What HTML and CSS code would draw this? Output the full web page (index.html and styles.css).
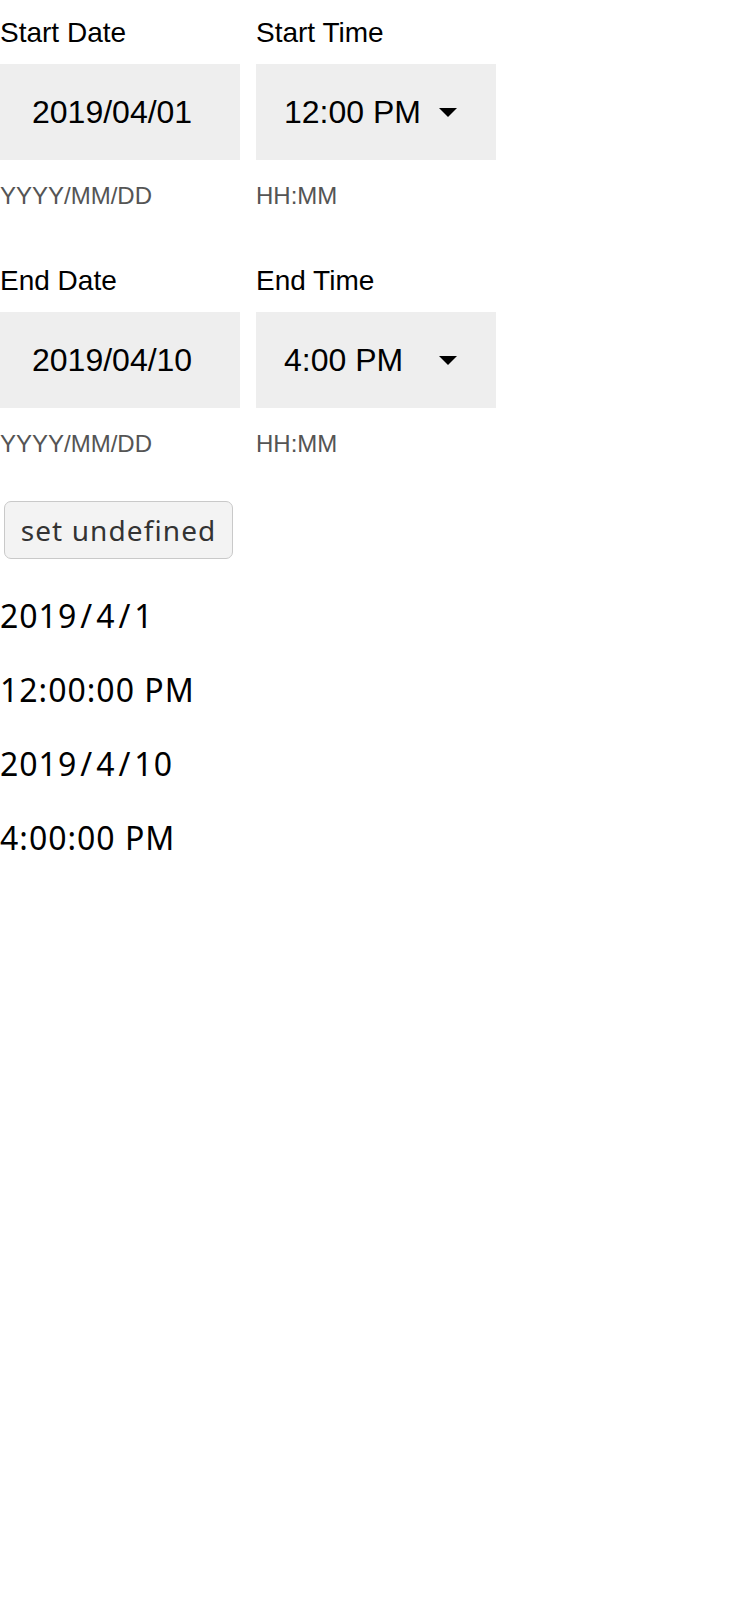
FILE: index.html
```html
<!DOCTYPE html>
<html lang="en">
<head>
<meta charset="utf-8">
<title>Date Time Pickers</title>
<link rel="stylesheet" href="styles.css">
</head>
<body>
<div class="page">
  <div class="row">
    <div class="field">
      <label class="label">Start Date</label>
      <div class="box">2019/04/01</div>
      <div class="helper">YYYY/MM/DD</div>
    </div>
    <div class="field">
      <label class="label">Start Time</label>
      <div class="box select"><span class="value">12:00 PM</span><svg class="arrow" width="18" height="9" viewBox="0 0 18 9"><path d="M0 0L9 9L18 0Z" fill="#000"/></svg></div>
      <div class="helper">HH:MM</div>
    </div>
  </div>
  <div class="row second">
    <div class="field">
      <label class="label">End Date</label>
      <div class="box">2019/04/10</div>
      <div class="helper">YYYY/MM/DD</div>
    </div>
    <div class="field">
      <label class="label">End Time</label>
      <div class="box select"><span class="value">4:00 PM</span><svg class="arrow" width="18" height="9" viewBox="0 0 18 9"><path d="M0 0L9 9L18 0Z" fill="#000"/></svg></div>
      <div class="helper">HH:MM</div>
    </div>
  </div>
  <button class="btn" type="button">set undefined</button>
  <div class="outputs">
    <p class="out">2019<span class="sl">/</span>4<span class="sl">/</span>1</p>
    <p class="out">12:00:00 PM</p>
    <p class="out">2019<span class="sl">/</span>4<span class="sl">/</span>10</p>
    <p class="out">4:00:00 PM</p>
  </div>
</div>
</body>
</html>
```

FILE: styles.css
```css
html, body {
  margin: 0;
  padding: 0;
  background: #fff;
}
.page {
  font-family: "Liberation Sans", Arial, sans-serif;
  color: #000;
}
.row {
  display: flex;
  gap: 16px;
}
.row.second {
  margin-top: 36px;
}
.field {
  width: 240px;
  display: flex;
  flex-direction: column;
}
.label {
  display: block;
  font-size: 28px;
  line-height: 32px;
  padding-top: 17px;
  padding-bottom: 15px;
}
.box {
  height: 96px;
  background: #eeeeee;
  font-size: 32px;
  line-height: 96px;
  padding-left: 32px;
  box-sizing: border-box;
}
.select {
  display: flex;
  align-items: center;
  padding-left: 28px;
}
.select .value {
  width: 155px;
}
.arrow {
  display: block;
}
.helper {
  font-size: 24px;
  line-height: 32px;
  margin-top: 20px;
  color: #555;
}
.btn {
  display: block;
  margin: 41px 0 0 4px;
  height: 58px;
  width: 229px;
  padding: 0;
  border: 1px solid #c9c9c9;
  border-radius: 7px;
  background: #f3f3f3;
  color: #333;
  font-family: "Noto Sans", sans-serif;
  font-size: 28px;
  letter-spacing: 1.1px;
  line-height: 56px;
}
.outputs {
  padding-top: 4px;
}
.out {
  font-family: "Noto Sans", sans-serif;
  font-size: 32px;
  letter-spacing: 1px;
  line-height: 42px;
  margin: 32px 0;
}
.sl {
  padding: 0 3px;
}
```
